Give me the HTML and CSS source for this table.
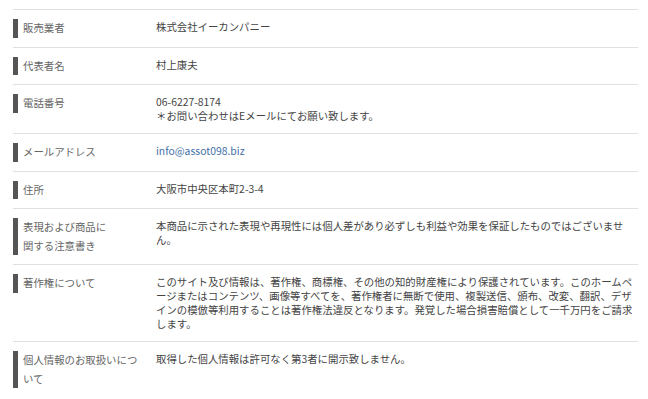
FILE: index.html
```html
<!DOCTYPE html>
<html lang="ja">
<head>
<meta charset="utf-8">
<link rel="stylesheet" href="styles.css">
</head>
<body>
<div class="wrap">
  <table class="info">
    <tr><th><span class="lbl">販売業者</span></th><td>株式会社イーカンパニー</td></tr>
    <tr><th><span class="lbl">代表者名</span></th><td>村上康夫</td></tr>
    <tr><th><span class="lbl">電話番号</span></th><td>06-6227-8174<br>＊お問い合わせはEメールにてお願い致します。</td></tr>
    <tr><th><span class="lbl">メールアドレス</span></th><td><a class="mail" href="#">info@assot098.biz</a></td></tr>
    <tr><th><span class="lbl">住所</span></th><td>大阪市中央区本町2-3-4</td></tr>
    <tr><th><span class="lbl">表現および商品に<br>関する注意書き</span></th><td>本商品に示された表現や再現性には個人差があり必ずしも利益や効果を保証したものではございません。</td></tr>
    <tr><th><span class="lbl">著作権について</span></th><td>このサイト及び情報は、著作権、商標権、その他の知的財産権により保護されています。このホームページまたはコンテンツ、画像等すべてを、著作権者に無断で使用、複製送信、頒布、改変、翻訳、デザインの模倣等利用することは著作権法違反となります。発覚した場合損害賠償として一千万円をご請求します。</td></tr>
    <tr><th><span class="lbl">個人情報のお取扱いについて</span></th><td>取得した個人情報は許可なく第3者に開示致しません。</td></tr>
  </table>
</div>
</body>
</html>
```

FILE: styles.css
```css
html, body {
  margin: 0;
  padding: 0;
  background: #fff;
}
.wrap {
  padding: 9px 10px 0 13px;
  font-family: "Noto Sans CJK JP", "Noto Sans", sans-serif;
  font-size: 10.4px;
}
.info {
  border-collapse: collapse;
  width: 625px;
}
.info tr {
  border-top: 1px solid #e0e0e0;
}
.info th {
  width: 143px;
  padding: 9px 0 9px 0;
  text-align: left;
  vertical-align: top;
  font-weight: normal;
}
.lbl {
  display: block;
  width: 118px;
  border-left: 5px solid #555;
  padding-left: 5px;
  line-height: 18.5px;
  color: #666;
}
.info td {
  padding: 10px 0 10px 0;
  vertical-align: top;
  line-height: 14px;
  color: #444;
}
.mail {
  color: #3f6fa8;
  text-decoration: none;
}
```
